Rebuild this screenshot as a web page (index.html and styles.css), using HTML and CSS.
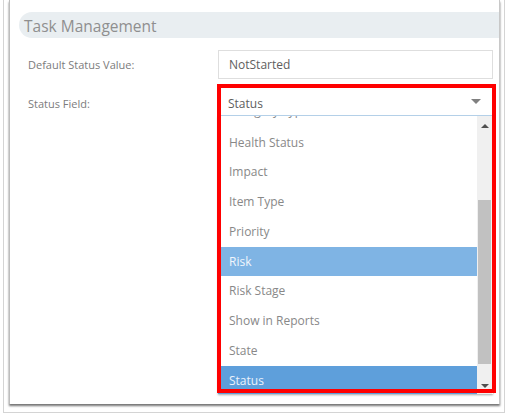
FILE: index.html
```html
<!DOCTYPE html>
<html>
<head>
<meta charset="utf-8">
<link rel="stylesheet" href="styles.css">
</head>
<body>
<div class="frame">
  <div class="panel">
    <div class="panel-head">Task Management</div>
    <div class="row">
      <div class="label">Default Status Value:</div>
      <div class="input">NotStarted</div>
    </div>
    <div class="row row-select">
      <div class="label">Status Field:</div>
      <div class="combo">
        <div class="select">
          <span>Status</span>
          <span class="caret"></span>
        </div>
        <div class="listbox">
          <ul class="options">
            <li class="partial"><span>Category Type</span></li>
            <li>Health Status</li>
            <li>Impact</li>
            <li>Item Type</li>
            <li>Priority</li>
            <li class="hover">Risk</li>
            <li>Risk Stage</li>
            <li>Show in Reports</li>
            <li>State</li>
            <li class="selected">Status</li>
          </ul>
          <div class="scrollbar">
            <span class="arrow up"></span>
            <div class="track"><div class="thumb"></div></div>
            <span class="arrow down"></span>
          </div>
        </div>
        <div class="annotation"></div>
      </div>
    </div>
  </div>
</div>
</body>
</html>
```
FILE: styles.css
```css
* { box-sizing: border-box; }
html, body { margin: 0; padding: 0; background: #fff; }
body {
  width: 508px;
  height: 416px;
  overflow: hidden;
  font-family: "Open Sans", "Noto Sans", sans-serif;
}
.frame {
  margin: 0 3px 0 3px;
  height: 413px;
  border: 1px solid #d4d4d4;
  border-top: 0;
  background: #fff;
  padding: 0 4px 8px 5px;
  display: flex;
  flex-direction: column;
}
.panel {
  flex: 1;
  border-left: 1px solid #bdbdbd;
  border-right: 1px solid #c8c8c8;
  box-shadow: 0 2px 2px rgba(0,0,0,0.55);
  background: #fff;
  padding-top: 12px;
}
.panel-head {
  margin-left: 9px;
  height: 26px;
  background: #e9eef1;
  border-radius: 13px 0 0 13px;
  color: #8f8f8f;
  font-size: 15.5px;
  line-height: 24px;
  padding: 2px 0 0 5px;
}
.row {
  display: grid;
  grid-template-columns: 190px 275px;
  align-items: center;
  padding-left: 18px;
  margin-top: 12px;
}
.label {
  color: #7c7c7c;
  font-size: 11px;
}
.input {
  height: 29px;
  border: 1px solid #dedede;
  color: #5e5e5e;
  font-size: 12px;
  line-height: 27px;
  padding-left: 10px;
}
.row-select {
  margin-top: 8px;
  align-items: start;
}
.row-select .label {
  line-height: 29px;
  padding-top: 2px;
}
.combo {
  position: relative;
}
.select {
  height: 29px;
  border-bottom: 1px solid #b9d6ee;
  color: #5e5e5e;
  font-size: 12px;
  padding: 5px 12px 0 10px;
  display: flex;
  align-items: center;
  justify-content: space-between;
}
.caret {
  width: 0;
  height: 0;
  margin-top: -5px;
  border-left: 5px solid transparent;
  border-right: 5px solid transparent;
  border-top: 5px solid #808080;
}
.listbox {
  height: 278px;
  display: flex;
  overflow: hidden;
  box-shadow: 0 1px 2px rgba(0,0,0,0.35);
  background: #fff;
}
.options {
  list-style: none;
  margin: 0;
  padding: 0;
  flex: 1;
}
.options li {
  height: 29.75px;
  line-height: 29.75px;
  padding-left: 11px;
  color: #888;
  font-size: 12px;
}
.options li.partial {
  height: 11.5px;
  overflow: hidden;
  position: relative;
}
.options li.partial span {
  display: block;
  margin-top: -20.5px;
}
.options li.hover {
  background: #7fb4e4;
  color: #f0f6fc;
}
.options li.selected {
  background: #5e9fdb;
  color: #eaf2fb;
}
.scrollbar {
  width: 15px;
  margin-right: 1px;
  background: #f0f0f0;
  display: flex;
  flex-direction: column;
  align-items: center;
}
.arrow {
  width: 0;
  height: 0;
  border-left: 4px solid transparent;
  border-right: 4px solid transparent;
  flex: none;
}
.arrow.up {
  border-bottom: 4px solid #505050;
  margin: 8px 0 6px;
}
.arrow.down {
  border-top: 4px solid #505050;
  margin: 6px 0 6px;
}
.track {
  flex: 1;
  width: 100%;
  display: flex;
  flex-direction: column;
  justify-content: flex-end;
  padding: 0 1px 14px;
}
.thumb {
  height: 164px;
  background: #c1c1c1;
}
.annotation {
  position: absolute;
  left: -1px;
  top: -3px;
  width: 279px;
  height: 309px;
  border: 4px solid #ff0000;
  pointer-events: none;
}
```
